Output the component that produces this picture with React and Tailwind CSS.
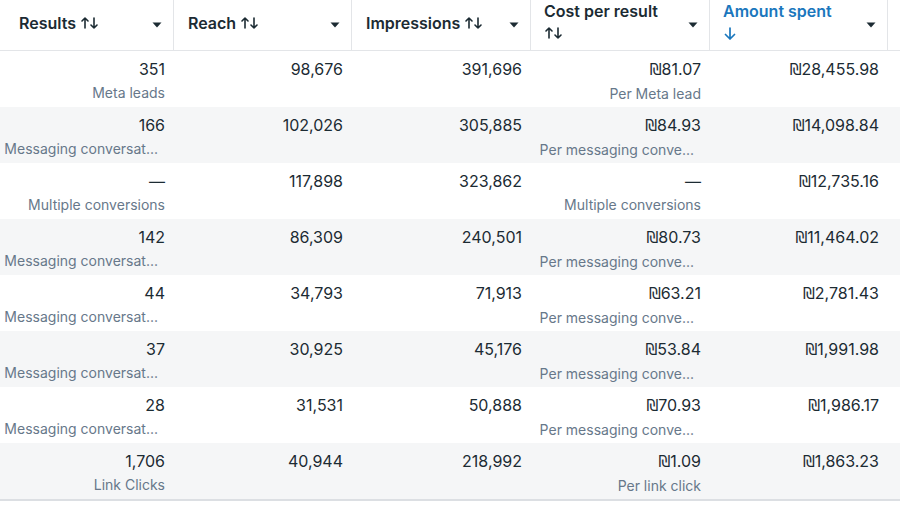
import React from 'react';

const cols = 'grid grid-cols-[174px_178px_179px_179px_178px_1fr]';

const MSG = 'Messaging conversat...';
const PER = 'Per messaging conve...';

const rows = [
  { r: '351', rs: 'Meta leads', reach: '98,676', imp: '391,696', c: '₪81.07', cs: 'Per Meta lead', amt: '₪28,455.98' },
  { r: '166', rs: MSG, reach: '102,026', imp: '305,885', c: '₪84.93', cs: PER, amt: '₪14,098.84' },
  { r: '—', rs: 'Multiple conversions', reach: '117,898', imp: '323,862', c: '—', cs: 'Multiple conversions', amt: '₪12,735.16' },
  { r: '142', rs: MSG, reach: '86,309', imp: '240,501', c: '₪80.73', cs: PER, amt: '₪11,464.02' },
  { r: '44', rs: MSG, reach: '34,793', imp: '71,913', c: '₪63.21', cs: PER, amt: '₪2,781.43' },
  { r: '37', rs: MSG, reach: '30,925', imp: '45,176', c: '₪53.84', cs: PER, amt: '₪1,991.98' },
  { r: '28', rs: MSG, reach: '31,531', imp: '50,888', c: '₪70.93', cs: PER, amt: '₪1,986.17' },
  { r: '1,706', rs: 'Link Clicks', reach: '40,944', imp: '218,992', c: '₪1.09', cs: 'Per link click', amt: '₪1,863.23' },
];

function SortIcon() {
  return (
    <svg width="18" height="12" viewBox="0 0 18 12" fill="none" stroke="#1c2b33" strokeWidth="1.6" strokeLinecap="round" strokeLinejoin="round" className="shrink-0">
      <path d="M4 11V1M1 4l3-3 3 3" />
      <path d="M13 1v10M10 8l3 3 3-3" />
    </svg>
  );
}

function DownIcon() {
  return (
    <svg width="12" height="13" viewBox="0 0 12 13" fill="none" stroke="#1a77bd" strokeWidth="1.7" strokeLinecap="round" strokeLinejoin="round">
      <path d="M6 1v11M1.5 7.5 6 12l4.5-4.5" />
    </svg>
  );
}

function Caret() {
  return (
    <svg width="10" height="6" viewBox="0 0 10 6" className="shrink-0">
      <path d="M0.5 0.5h9L5 5.5z" fill="#1c2b33" />
    </svg>
  );
}

function HeadCell({ title, pl, wrap, active }) {
  return (
    <div className={`flex items-center justify-between border-r border-[#e3e5e8] ${pl} pr-[11px]`}>
      {wrap ? (
        <div className="flex flex-col leading-[23px] -mt-[4px]">
          <span className={active ? 'text-[#1a77bd]' : ''}>{title}</span>
          <span className="pl-[1px] pt-[4px] h-[23px]">{active ? <DownIcon /> : <SortIcon />}</span>
        </div>
      ) : (
        <div className="flex items-center gap-[5px] -mt-[5px]">
          <span>{title}</span>
          <SortIcon />
        </div>
      )}
      <Caret />
    </div>
  );
}

function Money({ text }) {
  if (!text.startsWith('₪')) return text;
  return (
    <>
      <span className="text-[15px]" style={{ fontFamily: '"DejaVu Sans", sans-serif' }}>₪</span>
      {text.slice(1)}
    </>
  );
}

function Cell({ value, sub, subPad = 'mr-0' }) {
  return (
    <div className="flex flex-col items-end pl-[6px] pr-[9px] pt-[8px] min-w-0">
      <div className="text-[16px] leading-5 text-[#1c2b33] whitespace-nowrap"><Money text={value} /></div>
      {sub && <div className={`mt-[4px] text-[14px] leading-5 text-[#67788a] whitespace-nowrap ${sub.endsWith('...') ? subPad : ''}`}>{sub}</div>}
    </div>
  );
}

export default function App() {
  return (
    <div className="w-[900px] h-[526px] bg-white overflow-hidden" style={{ fontFamily: 'Inter, "Noto Sans", sans-serif' }}>
      <div className={`${cols} h-[51px] border-b border-[#e3e5e8] text-[16px] font-semibold text-[#1c2b33]`}>
        <HeadCell title="Results" pl="pl-[19px]" />
        <HeadCell title="Reach" pl="pl-[14px]" />
        <HeadCell title="Impressions" pl="pl-[14px]" />
        <HeadCell title="Cost per result" pl="pl-[13px]" wrap />
        <HeadCell title="Amount spent" pl="pl-[13px]" wrap active />
        <div />
      </div>
      <div className="border-b-2 border-[#dcdfe3]">
        {rows.map((row, i) => (
          <div key={i} className={`${cols} h-[56px] ${i % 2 === 1 ? 'bg-[#f5f6f7]' : 'bg-white'}`}>
            <Cell value={row.r} sub={row.rs} subPad="mr-[7px]" />
            <Cell value={row.reach} />
            <Cell value={row.imp} />
            <Cell value={row.c} sub={row.cs} subPad="mr-[7px]" />
            <Cell value={row.amt} />
            <div />
          </div>
        ))}
      </div>
    </div>
  );
}
